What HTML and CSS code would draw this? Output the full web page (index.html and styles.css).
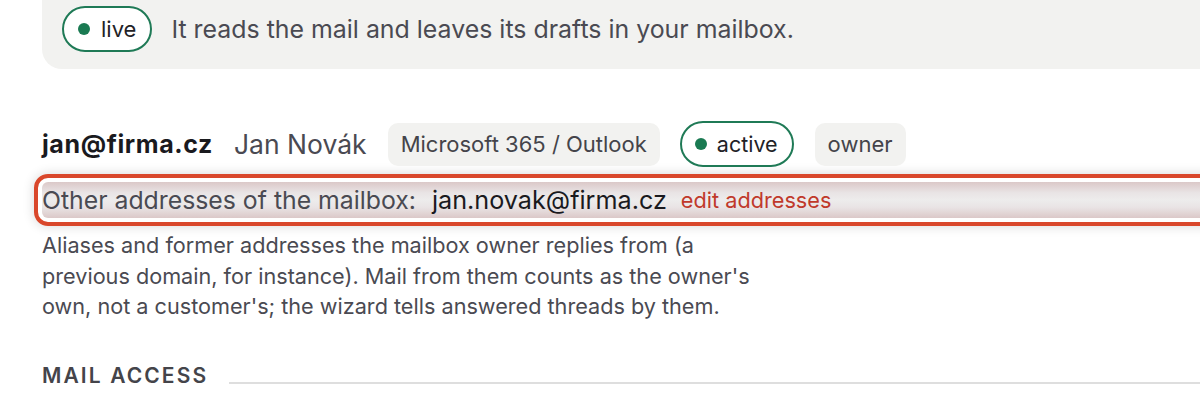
FILE: index.html
```html
<!DOCTYPE html>
<html lang="en">
<head>
<meta charset="utf-8">
<title>Mailbox</title>
<link rel="stylesheet" href="styles.css">
</head>
<body>
<main class="page">
  <div class="notice">
    <span class="pill"><span class="dot"></span>live</span>
    <span class="notice-text">It reads the mail and leaves its drafts in your mailbox.</span>
  </div>

  <div class="account">
    <span class="acc-email">jan@firma.cz</span>
    <span class="acc-name">Jan Novák</span>
    <span class="chip">Microsoft 365 / Outlook</span>
    <span class="pill pill-sm"><span class="dot"></span>active</span>
    <span class="chip">owner</span>
  </div>

  <div class="focus-ring">
    <div class="aliases">
      <span class="aliases-label">Other addresses of the mailbox:</span>
      <span class="aliases-value">jan.novak@firma.cz</span>
      <a class="aliases-edit" href="#">edit addresses</a>
    </div>
  </div>

  <p class="help">Aliases and former addresses the mailbox owner replies from (a previous domain, for instance). Mail from them counts as the owner's own, not a customer's; the wizard tells answered threads by them.</p>

  <div class="section-head">
    <span class="section-title">MAIL ACCESS</span>
    <span class="section-rule"></span>
  </div>
</main>
</body>
</html>
```

FILE: styles.css
```css
* { box-sizing: border-box; }

html, body {
  margin: 0;
  padding: 0;
  background: #ffffff;
  overflow: hidden;
}

body {
  font-family: Inter, "Noto Sans", sans-serif;
  color: #4a4a52;
}

.page {
  padding-left: 42px;
  width: 1200px;
}

.notice {
  display: flex;
  align-items: center;
  gap: 19px;
  background: #f2f2f0;
  margin-top: -40px;
  margin-right: -40px;
  height: 109px;
  padding: 29px 0 0 20px;
  border-bottom-left-radius: 20px;
}

.pill {
  display: inline-flex;
  align-items: center;
  gap: 11px;
  height: 46px;
  padding: 0 14px 0 14px;
  border: 2px solid #1f7a56;
  border-radius: 23px;
  background: #ffffff;
  color: #222226;
  font-size: 22px;
}

.pill .dot {
  width: 12px;
  height: 12px;
  border-radius: 50%;
  background: #1a7a52;
  flex: none;
}

.notice-text {
  font-size: 24.9px;
  color: #4a4a52;
}

.account {
  display: flex;
  align-items: center;
  margin-top: 52px;
  height: 46px;
}

.acc-email {
  font-weight: 700;
  font-size: 25px;
  color: #1a1a1e;
  letter-spacing: 0.6px;
}

.acc-name {
  margin-left: 21px;
  font-size: 26.5px;
  color: #4a4a52;
}

.chip {
  display: inline-flex;
  align-items: center;
  height: 43px;
  padding: 0 13px;
  border-radius: 10px;
  background: #f2f2f0;
  font-size: 22px;
  color: #44444a;
  margin-left: 21px;
}

.pill-sm {
  margin-left: 20px;
  font-size: 21.5px;
  padding: 0 14px 0 13px;
  gap: 10px;
}

.focus-ring {
  margin-top: 7px;
  margin-left: -8px;
  margin-right: -60px;
  border: 4px solid #d9472b;
  border-radius: 14px;
  padding: 4px;
  box-shadow: 0 0 12px rgba(0, 0, 0, 0.16);
}

.aliases {
  display: flex;
  align-items: center;
  height: 36px;
  padding-left: 0;
  border-radius: 6px;
  background: linear-gradient(#dbc8c8, #e9e4e5 30%, #edecec 50%, #e9e4e5 70%, #dbc8c8);
}

.aliases-label {
  font-size: 24.8px;
  color: #4a4a52;
}

.aliases-value {
  margin-left: 16px;
  font-size: 25.2px;
  color: #1a1a1e;
}

.aliases-edit {
  margin-left: 14px;
  font-size: 21.7px;
  color: #c0392b;
  text-decoration: none;
}

.help {
  margin: 4px 0 0;
  width: 735px;
  font-size: 21.65px;
  line-height: 30.5px;
  color: #4a4a52;
}

.section-head {
  display: flex;
  align-items: flex-end;
  gap: 21px;
  margin-top: 42px;
}

.section-title {
  font-size: 21px;
  font-weight: 600;
  letter-spacing: 2.1px;
  color: #44444a;
  line-height: 24px;
}

.section-rule {
  flex: 1;
  height: 2px;
  background: #dedede;
  margin-bottom: 4px;
}
```
